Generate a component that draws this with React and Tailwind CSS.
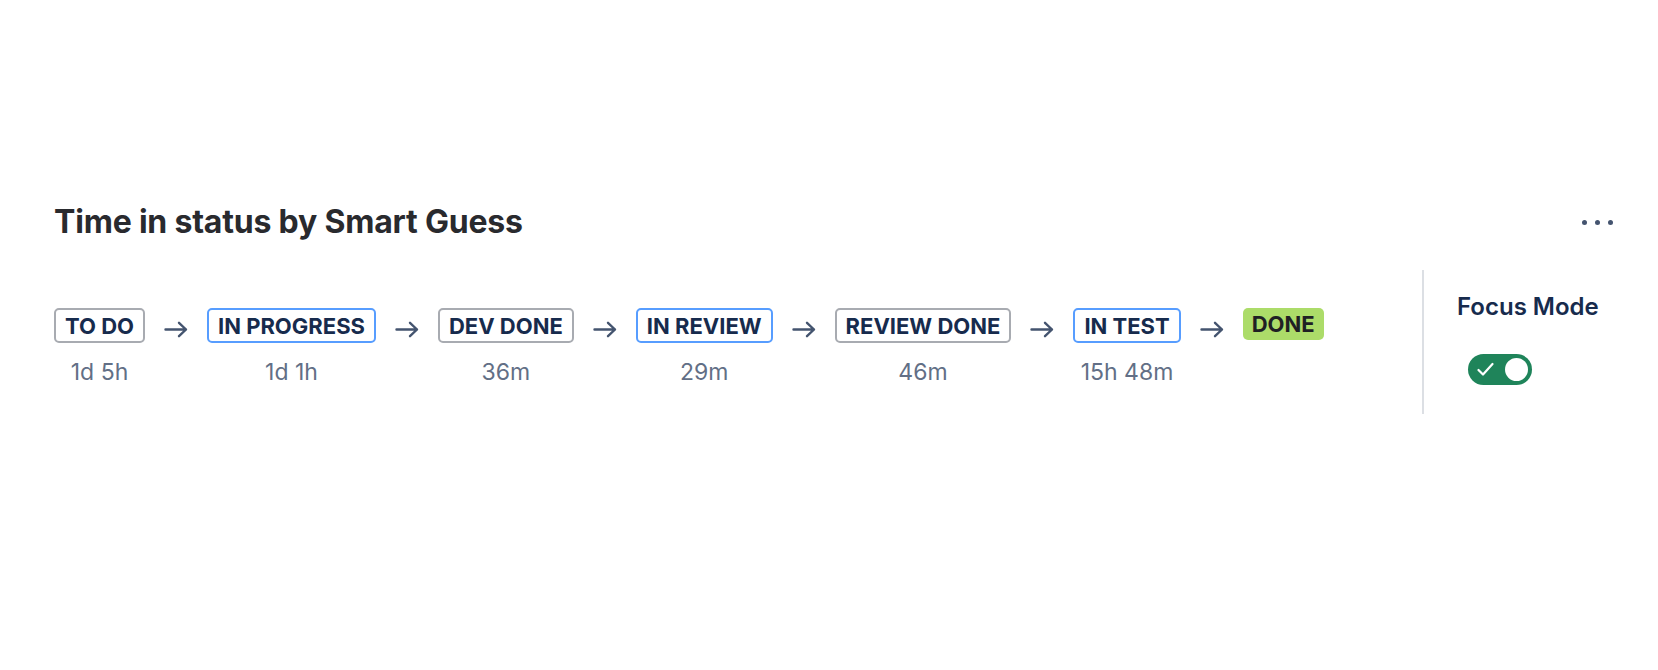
import React from "react";

const statuses = [
  { label: "TO DO", time: "1d 5h", kind: "gray" },
  { label: "IN PROGRESS", time: "1d 1h", kind: "blue" },
  { label: "DEV DONE", time: "36m", kind: "gray" },
  { label: "IN REVIEW", time: "29m", kind: "blue" },
  { label: "REVIEW DONE", time: "46m", kind: "gray" },
  { label: "IN TEST", time: "15h 48m", kind: "blue" },
  { label: "DONE", time: null, kind: "green" },
];

function Arrow() {
  return (
    <svg
      width="24"
      height="17"
      viewBox="0 0 24 17"
      fill="none"
      className="mx-[19px] mt-[13px] shrink-0"
    >
      <path
        d="M1.5 8.5H22M15 1.8L22 8.5L15 15.2"
        stroke="#44546F"
        strokeWidth="2.4"
        strokeLinecap="round"
        strokeLinejoin="round"
      />
    </svg>
  );
}

function Badge({ label, kind }) {
  if (kind === "green") {
    return (
      <div className="h-[32px] px-[9px] flex items-center rounded-[5px] bg-[#acdc69] text-[22px] font-bold text-[#1f2024] leading-none">
        {label}
      </div>
    );
  }
  const border = kind === "blue" ? "border-[#579dff]" : "border-[#a8abb1]";
  return (
    <div
      className={`h-[35px] px-[9px] flex items-center rounded-[5px] border-2 ${border} text-[22px] font-bold text-[#172b4d] leading-none`}
    >
      {label}
    </div>
  );
}

export default function App() {
  return (
    <div
      className="w-[1658px] h-[670px] bg-white"
      style={{ fontFamily: "Inter, 'Noto Sans', sans-serif" }}
    >
      <div className="pt-[202px] pl-[54px] pr-[45px]">
        <div className="flex items-center justify-between h-[40px]">
          <h1 className="text-[32px] leading-[40px] font-bold text-[#292a2e] tracking-[-0.2px]">
            Time in status by Smart Guess
          </h1>
          <div className="flex items-center gap-[8px]">
            <span className="w-[5px] h-[5px] rounded-full bg-[#44546f]" />
            <span className="w-[5px] h-[5px] rounded-full bg-[#44546f]" />
            <span className="w-[5px] h-[5px] rounded-full bg-[#44546f]" />
          </div>
        </div>

        <div className="flex mt-[28px]">
          <div className="flex-1 pt-[38px] flex items-start">
            {statuses.map((s, i) => (
              <React.Fragment key={s.label}>
                {i > 0 && <Arrow />}
                <div className="flex flex-col items-center">
                  <Badge label={s.label} kind={s.kind} />
                  {s.time && (
                    <div className="mt-[15px] text-[23px] leading-[28px] text-[#626f86]">
                      {s.time}
                    </div>
                  )}
                </div>
              </React.Fragment>
            ))}
          </div>
          <div className="w-[2px] h-[144px] bg-[#dcdfe4] shrink-0" />
          <div className="pl-[33px] pt-[21px] w-[189px]">
            <div className="text-[24px] leading-[32px] font-semibold text-[#172b4d] whitespace-nowrap">
              Focus Mode
            </div>
            <div className="mt-[31px] ml-[11px] w-[64px] h-[31px] rounded-full bg-[#1f845a] flex items-center justify-between pl-[9px] pr-[4px]">
              <svg width="17" height="15" viewBox="0 0 17 15" fill="none">
                <path
                  d="M1.5 8L6 12.5L15.5 2"
                  stroke="white"
                  strokeWidth="2.2"
                  strokeLinecap="round"
                  strokeLinejoin="round"
                />
              </svg>
              <span className="w-[23px] h-[23px] rounded-full bg-white" />
            </div>
          </div>
        </div>
      </div>
    </div>
  );
}
